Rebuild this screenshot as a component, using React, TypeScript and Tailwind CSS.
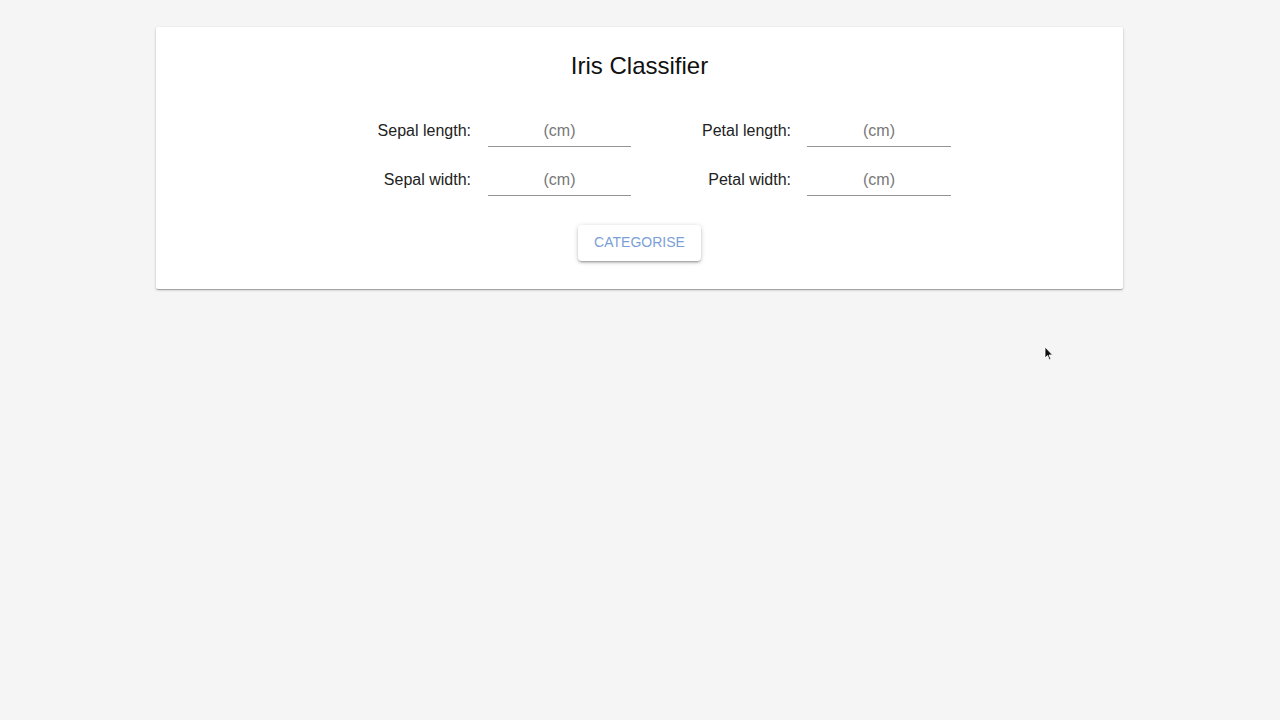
import React from "react";

function Field({ label, gap, width }: { label: string; gap: "a" | "b"; width: "a" | "b" }) {
  return (
    <div className="flex items-center">
      <label className="w-[100px] text-right text-[16px] text-[#222]">{label}</label>
      <input
        placeholder="(cm)"
        className={`${gap === "a" ? "ml-[17px]" : "ml-[16px]"} ${width === "a" ? "w-[143px]" : "w-[144px]"} h-[32px] border-b border-[#949494] bg-transparent text-center text-[16px] text-[#222] outline-none placeholder:text-[#777]`}
      />
    </div>
  );
}

export default function App() {
  return (
    <div
      className="relative min-h-[720px] w-full bg-[#f5f5f5] pt-[27px] pr-[1px]"
      style={{ fontFamily: '"Liberation Sans", Arial, sans-serif' }}
    >
      <div className="mx-auto w-[967px] rounded-[2px] bg-white pt-[23px] pb-[28px] shadow-[0_1px_3px_rgba(0,0,0,0.2),0_1px_1px_rgba(0,0,0,0.14),0_2px_1px_-1px_rgba(0,0,0,0.12)]">
        <h1 className="text-center text-[24px] leading-[32px] text-[#111]">Iris Classifier</h1>
        <div className="mt-[33px] flex flex-col gap-[17px] pl-[215px]">
          <div className="flex gap-[60px]">
            <Field label="Sepal length:" gap="a" width="a" />
            <Field label="Petal length:" gap="b" width="b" />
          </div>
          <div className="flex gap-[60px]">
            <Field label="Sepal width:" gap="a" width="a" />
            <Field label="Petal width:" gap="b" width="b" />
          </div>
        </div>
        <div className="mt-[29px] flex justify-center">
          <button className="h-[36px] w-[123px] rounded-[4px] bg-white pb-[2px] text-[14px] text-[#7a9fd8] shadow-[0_1px_5px_rgba(0,0,0,0.2),0_2px_2px_rgba(0,0,0,0.14),0_3px_1px_-2px_rgba(0,0,0,0.12)]">
            CATEGORISE
          </button>
        </div>
      </div>
      <svg className="absolute left-[1044px] top-[346px]" width="10" height="15" viewBox="0 0 10 15">
        <path d="M1 1 L1 12 L3.5 9.5 L5.5 14 L7 13.3 L5 9 L8.5 9 Z" fill="#111" stroke="#fff" strokeWidth="0.8" />
      </svg>
    </div>
  );
}
